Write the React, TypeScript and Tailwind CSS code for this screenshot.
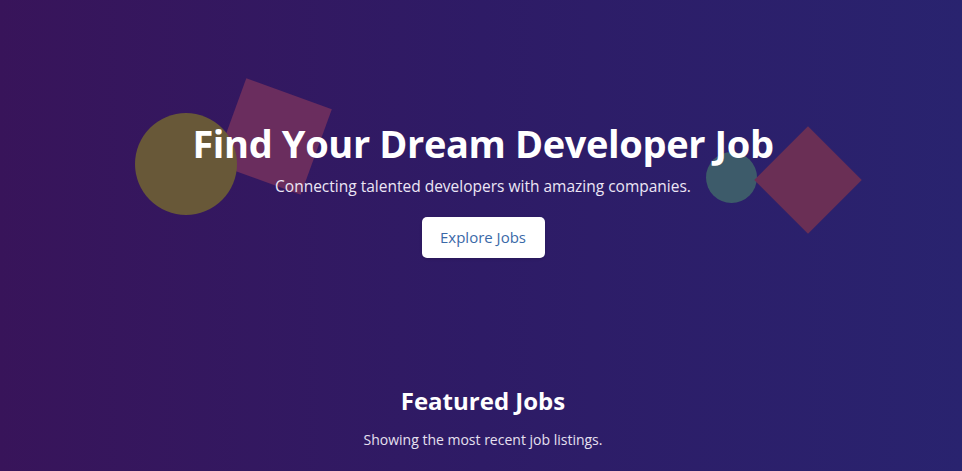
import React from 'react';

const font = { fontFamily: '"Open Sans", "Noto Sans", sans-serif' };

function Shapes() {
  return (
    <div className="pointer-events-none absolute inset-0">
      <div className="absolute left-[228px] top-[91px] h-[91px] w-[91px] rotate-[20deg] bg-[#6a2d5e]" />
      <div className="absolute left-[135px] top-[113px] h-[102px] w-[102px] rounded-full bg-[#685838]" />
      <div className="absolute left-[706px] top-[152px] h-[51px] w-[51px] rounded-full bg-[#3d5b6a]" />
      <div className="absolute left-[770px] top-[142px] h-[76px] w-[76px] rotate-45 bg-[#6a2f55]" />
    </div>
  );
}

export default function App() {
  return (
    <div
      className="min-h-[471px] w-full bg-gradient-to-r from-[#38145a] via-[#2e1b66] to-[#29236f] pl-[4px] text-white"
      style={font}
    >
      <section className="relative -ml-[4px] overflow-hidden pt-[120px] pb-[119px]">
        <Shapes />
        <div className="relative flex flex-col items-center pl-[4px] text-center">
          <h1 className="text-[38px] font-bold leading-[46px] tracking-[-0.01em]">
            Find Your Dream Developer Job
          </h1>
          <p className="mt-[8px] text-[15.5px] leading-[24px] text-[#ece6f5]">
            Connecting talented developers with amazing companies.
          </p>
          <button className="mt-[19px] h-[41px] w-[123px] rounded-[5px] bg-white text-[15px] text-[#3a69a8] shadow-sm">
            Explore Jobs
          </button>
        </div>
      </section>
      <section className="flex flex-col items-center pt-[8px] text-center">
        <h2 className="text-[24px] font-bold leading-[32px]">Featured Jobs</h2>
        <p className="mt-[13px] text-[14px] leading-[20px] text-[#e6e0f0]">
          Showing the most recent job listings.
        </p>
      </section>
    </div>
  );
}
